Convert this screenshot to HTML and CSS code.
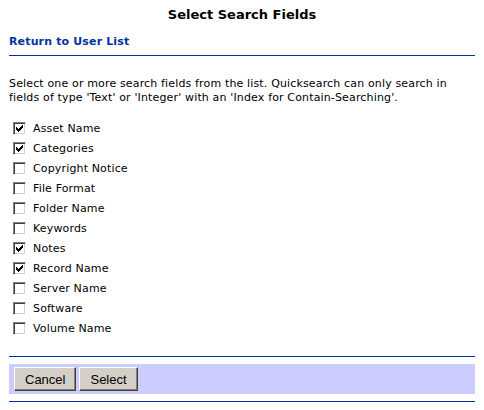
FILE: index.html
```html
<!DOCTYPE html>
<html lang="en">
<head>
    <meta charset="UTF-8">
    <title>Select Search Fields</title>
    <link rel="stylesheet" href="styles.css">
</head>
<body>
    <div class="page">
        <h1>Select Search Fields</h1>
        <a class="back" href="#">Return to User List</a>
        <div class="rule"></div>
        <p class="intro">Select one or more search fields from the list. Quicksearch can only search in fields of type 'Text' or 'Integer' with an 'Index for Contain-Searching'.</p>
        <ul class="fields">
            <li><span class="box"><svg width="11" height="11" viewBox="1 1 11 11"><path d="M3 5h1v3H3zM4 6h1v3H4zM5 7h1v3H5zM6 6h1v3H6zM7 5h1v3H7zM8 4h1v3H8zM9 3h1v3H9z" fill="#000"/></svg></span>Asset Name</li>
            <li><span class="box"><svg width="11" height="11" viewBox="1 1 11 11"><path d="M3 5h1v3H3zM4 6h1v3H4zM5 7h1v3H5zM6 6h1v3H6zM7 5h1v3H7zM8 4h1v3H8zM9 3h1v3H9z" fill="#000"/></svg></span>Categories</li>
            <li><span class="box"></span>Copyright Notice</li>
            <li><span class="box"></span>File Format</li>
            <li><span class="box"></span>Folder Name</li>
            <li><span class="box"></span>Keywords</li>
            <li><span class="box"><svg width="11" height="11" viewBox="1 1 11 11"><path d="M3 5h1v3H3zM4 6h1v3H4zM5 7h1v3H5zM6 6h1v3H6zM7 5h1v3H7zM8 4h1v3H8zM9 3h1v3H9z" fill="#000"/></svg></span>Notes</li>
            <li><span class="box"><svg width="11" height="11" viewBox="1 1 11 11"><path d="M3 5h1v3H3zM4 6h1v3H4zM5 7h1v3H5zM6 6h1v3H6zM7 5h1v3H7zM8 4h1v3H8zM9 3h1v3H9z" fill="#000"/></svg></span>Record Name</li>
            <li><span class="box"></span>Server Name</li>
            <li><span class="box"></span>Software</li>
            <li><span class="box"></span>Volume Name</li>
        </ul>
        <div class="rule"></div>
        <div class="buttons">
            <button type="button">Cancel</button>
            <button type="button">Select</button>
        </div>
        <div class="rule"></div>
    </div>
</body>
</html>
```

FILE: styles.css
```css
body {
    margin: 0;
    background: #fff;
    font-family: "DejaVu Sans", Verdana, sans-serif;
    font-size: 11px;
    letter-spacing: 0.15px;
    color: #000;
}
.page {
    padding: 0 9px;
}
h1 {
    margin: 0;
    padding-top: 7px;
    font-size: 13px;
    line-height: 16px;
    letter-spacing: 0;
    text-align: center;
}
.back {
    display: block;
    margin-top: 12px;
    color: #0033a0;
    font-weight: bold;
    font-size: 11px;
    line-height: 14px;
    text-decoration: none;
}
.rule {
    height: 1px;
    background: #003399;
}
.back + .rule {
    margin-top: 6px;
}
.intro {
    margin: 21px 0 0;
    line-height: 14px;
}
.fields {
    list-style: none;
    margin: 13px 0 0;
    padding: 0 0 0 4px;
}
.fields li {
    display: flex;
    align-items: center;
    height: 20px;
}
.box {
    display: flex;
    align-items: center;
    justify-content: center;
    width: 13px;
    height: 13px;
    box-sizing: border-box;
    margin-right: 7px;
    background: #fff;
    border: 1px solid;
    border-color: #808080 #fff #fff #808080;
    box-shadow: inset 1px 1px #404040, inset -1px -1px #d4d0c8;
}
.fields + .rule {
    margin-top: 18px;
}
.buttons {
    display: flex;
    gap: 3px;
    margin-top: 7px;
    padding: 3px 5px;
    background: #ccccff;
}
.buttons button {
    height: 24px;
    padding: 0 10px;
    font-family: "Liberation Sans", Arial, sans-serif;
    font-size: 13px;
    letter-spacing: 0;
    color: #000;
    background: #d4d0c8;
    border: 1px solid;
    border-color: #fff #404040 #404040 #fff;
    box-shadow: inset -1px -1px #808080;
}
.buttons + .rule {
    margin-top: 7px;
}
```
